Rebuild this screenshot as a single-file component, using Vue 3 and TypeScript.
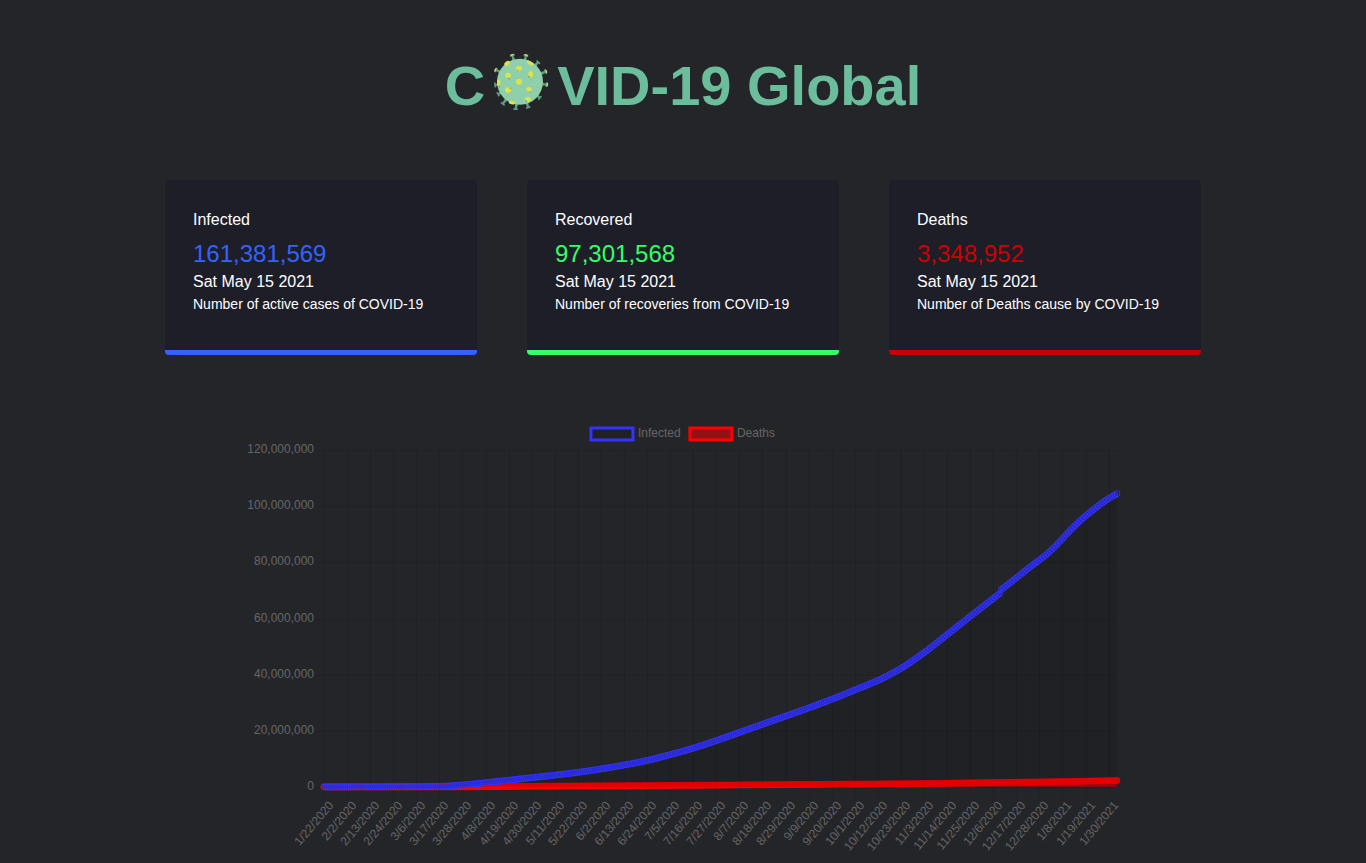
<script setup lang="ts">
interface Card {
  kind: string
  title: string
  value: string
  note: string
}

const cards: Card[] = [
  { kind: 'infected', title: 'Infected', value: '161,381,569', note: 'Number of active cases of COVID-19' },
  { kind: 'recovered', title: 'Recovered', value: '97,301,568', note: 'Number of recoveries from COVID-19' },
  { kind: 'deaths', title: 'Deaths', value: '3,348,952', note: 'Number of Deaths cause by COVID-19' },
]

// Chart geometry, in viewBox units
const left = 85
const right = 878
const top = 33
const bottom = 370
const days = 378
const step = (right - left) / days

type Key = [number, number]

// Known totals in millions, by day since 1/22/2020
const infectedKeys: Key[] = [
  [0, 0], [40, 0.09], [55, 0.2], [66, 0.7], [77, 1.5], [88, 2.4], [99, 3.3], [110, 4.2], [121, 5.2],
  [132, 6.4], [143, 7.8], [154, 9.4], [165, 11.5], [176, 13.8], [187, 16.5], [198, 19.4],
  [209, 22.3], [220, 25.2], [231, 28.1], [242, 31.2], [253, 34.5], [264, 37.9], [275, 42.2],
  [286, 47.8], [297, 54.2], [308, 60.7], [322, 68.8], [323, 70.4], [331, 75], [336, 78],
  [343, 81.9], [349, 86], [354, 90], [360, 94.5], [367, 98.9], [373, 102.2], [378, 104.4],
]
const deathKeys: Key[] = [
  [0, 0], [66, 0.03], [99, 0.23], [165, 0.53], [231, 0.9], [286, 1.2], [323, 1.6], [350, 1.87], [378, 2.27],
]

interface Dot { x: number; y: number }

// Monotone cubic interpolation between the known totals, one point a day
function series(keys: Key[]): Dot[] {
  const secant = (k: number): number => (keys[k + 1][1] - keys[k][1]) / (keys[k + 1][0] - keys[k][0])
  const isJump = (k: number): boolean => keys[k + 1][0] - keys[k][0] === 1
  const slope = keys.map((_, k) => {
    if (k === 0) return secant(0)
    if (k === keys.length - 1 || isJump(k)) return secant(k - 1)
    if (isJump(k - 1)) return secant(k)
    const a = secant(k - 1)
    const b = secant(k)
    return a + b > 0 ? (2 * a * b) / (a + b) : 0
  })
  const out: Dot[] = []
  let k = 0
  for (let d = 0; d <= days; d++) {
    while (k < keys.length - 2 && d > keys[k + 1][0]) k++
    const [d0, v0] = keys[k]
    const [d1, v1] = keys[k + 1]
    const h = d1 - d0
    const t = (d - d0) / h
    const u = 1 - t
    const v =
      v0 * (1 + 2 * t) * u * u + slope[k] * h * t * u * u +
      v1 * t * t * (3 - 2 * t) - slope[k + 1] * h * t * t * u
    out.push({ x: left + d * step, y: bottom - (v / 120) * (bottom - top) })
  }
  return out
}

const infected = series(infectedKeys)
const deaths = series(deathKeys)
const line = (p: Dot[]): string => 'M' + p.map((d) => `${d.x.toFixed(2)} ${d.y.toFixed(2)}`).join('L')
const area = (p: Dot[]): string => `${line(p)}L${right} ${bottom}L${left} ${bottom}Z`

const layers = [
  { name: 'deaths', dots: deaths },
  { name: 'infected', dots: infected },
]

const rows = [120, 100, 80, 60, 40, 20, 0].map((v) => ({
  text: v ? `${v},000,000` : '0',
  y: Math.round(bottom - (v / 120) * (bottom - top)),
}))

const ticks = Array.from({ length: 35 }, (_, i) => {
  const date = new Date(Date.UTC(2020, 0, 22 + i * 11))
  return {
    text: `${date.getUTCMonth() + 1}/${date.getUTCDate()}/${date.getUTCFullYear()}`,
    x: Math.round(left + i * 11 * step),
  }
})

// Spikes of the virus: tip position, and whether the tip is lit
const spikes = [
  { x: 83, y: 30, lit: true },
  { x: 124, y: 31, lit: true },
  { x: 161, y: 50, lit: false },
  { x: 183, y: 79, lit: true },
  { x: 186, y: 118, lit: true },
  { x: 166, y: 158, lit: false },
  { x: 131, y: 187, lit: false },
  { x: 93, y: 192, lit: false },
  { x: 54, y: 176, lit: false },
  { x: 40, y: 147, lit: false },
  { x: 31, y: 119, lit: false },
  { x: 34, y: 74, lit: true },
].map((s) => ({ ...s, angle: (Math.atan2(s.y - 109, s.x - 106) * 180) / Math.PI }))
</script>

<template>
  <main class="page">
    <h1 class="title">
      <span>C</span>
      <svg class="virus" viewBox="25 20 174 174" aria-hidden="true">
        <g v-for="s in spikes" :key="s.x" :transform="`translate(${s.x} ${s.y}) rotate(${s.angle})`">
          <path d="M-18 -5L-3 -3V-7H2V7H-3V3L-18 5Z" fill="#649c82" />
          <rect v-if="s.lit" x="0" y="-6" width="4" height="11" rx="2" fill="#dfe34b" />
        </g>
        <circle cx="106" cy="109" r="69" fill="#8fcfaa" />
        <g fill="#dfe34b">
          <ellipse cx="103" cy="69" rx="9" ry="7" />
          <ellipse cx="138" cy="87" rx="7" ry="10" />
          <ellipse cx="70" cy="90" rx="8" ry="8" />
          <circle cx="103" cy="109" r="9" />
          <ellipse cx="70" cy="134" rx="9" ry="8" />
          <ellipse cx="133" cy="132" rx="8" ry="7" />
          <ellipse cx="129" cy="162" rx="9" ry="7" />
          <ellipse cx="82" cy="172" rx="10" ry="5" transform="rotate(12 82 172)" />
          <ellipse cx="42" cy="112" rx="5" ry="10" />
          <ellipse cx="67" cy="54" rx="9" ry="6" transform="rotate(-35 67 54)" />
          <ellipse cx="136" cy="53" rx="11" ry="5" transform="rotate(32 136 53)" />
        </g>
        <g fill="#649c82">
          <path d="M97 73l5 0-3 5zM131 92h6l-4 6zM69 98h6l-1 6zM133 139h6l-3 5zM121 165h6l-2 6zM73 127h6l-1 5zM40 121h6l-1 6z" />
        </g>
      </svg>
      <span>VID-19 Global</span>
    </h1>

    <section class="cards">
      <article v-for="card in cards" :key="card.kind" class="card" :class="card.kind">
        <p class="name">{{ card.title }}</p>
        <h2 class="value">{{ card.value }}</h2>
        <p class="date">Sat May 15 2021</p>
        <p class="note">{{ card.note }}</p>
      </article>
    </section>

    <svg class="chart" viewBox="0 0 888 444" role="img" aria-label="Infected and deaths over time">
      <g class="grid">
        <path v-for="r in rows" :key="r.text" :d="`M${left - 9} ${r.y + 0.5}H${right}`" />
        <path v-for="t in ticks" :key="t.text" :d="`M${t.x + 0.5} ${top}V${bottom + 10}`" />
      </g>
      <g v-for="layer in layers" :key="layer.name" :class="`series-${layer.name}`">
        <path class="area" :d="area(layer.dots)" />
        <path class="line" :d="line(layer.dots)" />
        <circle v-for="(d, i) in layer.dots" :key="i" class="dot" :cx="d.x" :cy="d.y" r="3" />
      </g>
      <g class="legend">
        <rect class="key-infected" x="352" y="11" width="42" height="12" />
        <text x="399" y="20">Infected</text>
        <rect class="key-deaths" x="451" y="11" width="42" height="12" />
        <text x="498" y="20">Deaths</text>
      </g>
      <g class="labels">
        <text v-for="r in rows" :key="r.text" x="75" :y="r.y + 3">{{ r.text }}</text>
        <text v-for="t in ticks" :key="t.text" :transform="`translate(${t.x + 7} 386) rotate(-50)`" y="4">{{ t.text }}</text>
      </g>
    </svg>
  </main>
</template>

<style>
body {
  margin: 0;
  background: #242529;
}
</style>

<style scoped>
.page {
  display: flex;
  flex-direction: column;
  align-items: center;
  overflow: hidden;
  color: #fff;
  font-family: "Liberation Sans", Arial, sans-serif;
}
.title {
  display: flex;
  align-items: center;
  margin: 51px 0 0;
  height: 70px;
  color: #6bbd9b;
  font-size: 56px;
  line-height: 70px;
}
.virus {
  width: 58px;
  height: 58px;
  margin: 0 6px 10px 8px;
}
.cards {
  display: grid;
  grid-template-columns: repeat(3, 1fr);
  gap: 50px;
  box-sizing: border-box;
  width: 100%;
  max-width: 1036px;
  margin-top: 59px;
}
.card {
  padding: 28px 28px 36px;
  border-bottom: 5px solid;
  border-radius: 4px;
  background: #1e1e29;
}
.card p,
.value {
  margin: 0;
  color: #fff;
  font-weight: 400;
}
.card .name {
  margin-bottom: 8px;
  font-size: 16px;
  line-height: 24px;
}
.card .value {
  margin-bottom: 2px;
  font-size: 24px;
  line-height: 28px;
}
.card .date {
  font-size: 16px;
  line-height: 24px;
}
.card .note {
  font-size: 14px;
  line-height: 20px;
}
.infected { border-color: #3363ff; }
.recovered { border-color: #33ff66; }
.deaths { border-color: #cc0000; }
.infected .value { color: #3363ff; }
.recovered .value { color: #33ff66; }
.deaths .value { color: #cc0000; }
.chart {
  display: block;
  width: 65%;
  margin-top: 62px;
}
.grid path {
  fill: none;
  stroke: rgba(0, 0, 0, 0.1);
}
.line {
  fill: none;
  stroke-width: 3;
}
.series-infected .area { fill: rgba(0, 0, 0, 0.1); }
.series-infected .line { stroke: #3333ff; }
.series-infected .dot { fill: rgba(0, 0, 0, 0.1); stroke: #3333ff; }
.series-deaths .area { fill: rgba(255, 0, 0, 0.5); }
.series-deaths .line { stroke: #ff0000; }
.series-deaths .dot { fill: rgba(255, 0, 0, 0.5); stroke: #ff0000; }
.legend rect { stroke-width: 3; }
.key-infected { fill: rgba(0, 0, 0, 0.1); stroke: #3333ff; }
.key-deaths { fill: rgba(255, 0, 0, 0.5); stroke: #ff0000; }
.chart text {
  fill: #666;
  font-size: 12px;
}
.labels text { text-anchor: end; }
</style>
